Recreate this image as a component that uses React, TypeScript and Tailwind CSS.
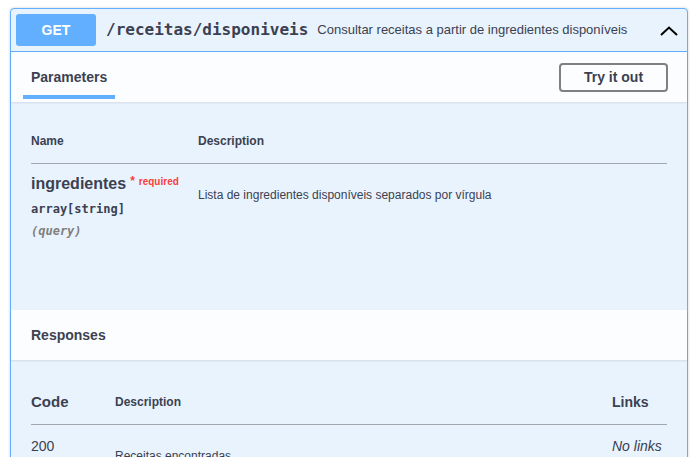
import React from 'react';

const sans = 'font-["Liberation_Sans",Arial,sans-serif]';
const mono = 'font-["DejaVu_Sans_Mono",monospace]';

const ChevronUp: React.FC = () => (
    <svg width="18" height="10" viewBox="0 0 18 10" fill="none" stroke="#000" strokeWidth="2">
        <path d="M1 9 L9 1.5 L17 9" />
    </svg>
);

const App: React.FC = () => {
    return (
        <div className={`w-[695px] h-[457px] overflow-hidden bg-white ${sans} text-[#3b4151]`}>
            <div className="ml-[10px] mt-[8px] w-[678px] border border-[#61affe] rounded-[4px] bg-[#e9f3fd] shadow-[0_0_3px_rgba(0,0,0,0.19)]">
                {/* summary bar */}
                <div className="flex items-center h-[43px] px-[5px] border-b border-[#61affe]">
                    <span className="flex items-center justify-center w-[80px] h-[32px] rounded-[3px] bg-[#61affe] text-white text-[14px] font-bold">
                        GET
                    </span>
                    <span className={`ml-[10px] ${mono} text-[16px] font-bold text-[#3b4151]`}>/receitas/disponiveis</span>
                    <span className="ml-[9px] text-[13px] text-[#3b4151] flex-1">
                        Consultar receitas a partir de ingredientes disponíveis
                    </span>
                    <span className="mr-[4px] mt-[1px]">
                        <ChevronUp />
                    </span>
                </div>

                {/* parameters tab header */}
                <div className="flex items-center justify-between h-[50px] bg-[#fbfdff] shadow-[0_1px_2px_rgba(0,0,0,0.1)] pl-[12px] pr-[19px]">
                    <div className="relative h-full flex items-center px-[8px]">
                        <span className="text-[14px] font-bold">Parameters</span>
                        <span className="absolute left-0 right-0 bottom-[3px] h-[4px] bg-[#61affe]" />
                    </div>
                    <button className="w-[109px] h-[29px] border-2 border-[#808080] rounded-[4px] text-[14px] font-bold text-[#3b4151] bg-transparent">
                        Try it out
                    </button>
                </div>

                {/* parameters table */}
                <div className="h-[208px] px-[20px]">
                    <div className="flex items-center h-[62px] border-b border-[#a3a7ae] text-[12px] font-bold pt-[17px]">
                        <span className="w-[167px]">Name</span>
                        <span>Description</span>
                    </div>
                    <div className="flex pt-[9px]">
                        <div className="w-[167px]">
                            <div className="flex items-start">
                                <span className="text-[16px] font-bold leading-[21px]">ingredientes</span>
                                <span className="ml-[4px] text-[10px] font-bold text-[#f93e3e] leading-[13px] mt-[2px]">
                                    <span className="text-[12px] mr-[4px]">*</span>required
                                </span>
                            </div>
                            <div className={`${mono} text-[12px] font-bold mt-[8px] leading-[15px]`}>array[string]</div>
                            <div className={`${mono} text-[12px] italic font-bold text-[#808080] mt-[7px] leading-[15px]`}>(query)</div>
                        </div>
                        <div className="text-[12px] pt-[13px]">
                            Lista de ingredientes disponíveis separados por vírgula
                        </div>
                    </div>
                </div>

                {/* responses header */}
                <div className="flex items-center h-[50px] bg-[#fbfdff] shadow-[0_1px_2px_rgba(0,0,0,0.1)] px-[20px]">
                    <span className="text-[14px] font-bold">Responses</span>
                </div>

                {/* responses table */}
                <div className="h-[120px] px-[20px]">
                    <div className="flex items-center h-[65px] border-b border-[#a3a7ae] font-bold pt-[20px]">
                        <span className="w-[84px] text-[15px]">Code</span>
                        <span className="flex-1 text-[12px]">Description</span>
                        <span className="w-[55px] text-[14px]">Links</span>
                    </div>
                    <div className="flex pt-[12px]">
                        <span className="w-[84px] text-[14px] leading-[18px]">200</span>
                        <span className="flex-1 text-[12px] pt-[10px]">Receitas encontradas</span>
                        <span className="w-[55px] text-[14px] italic leading-[18px]">No links</span>
                    </div>
                </div>
            </div>
        </div>
    );
};

export default App;
